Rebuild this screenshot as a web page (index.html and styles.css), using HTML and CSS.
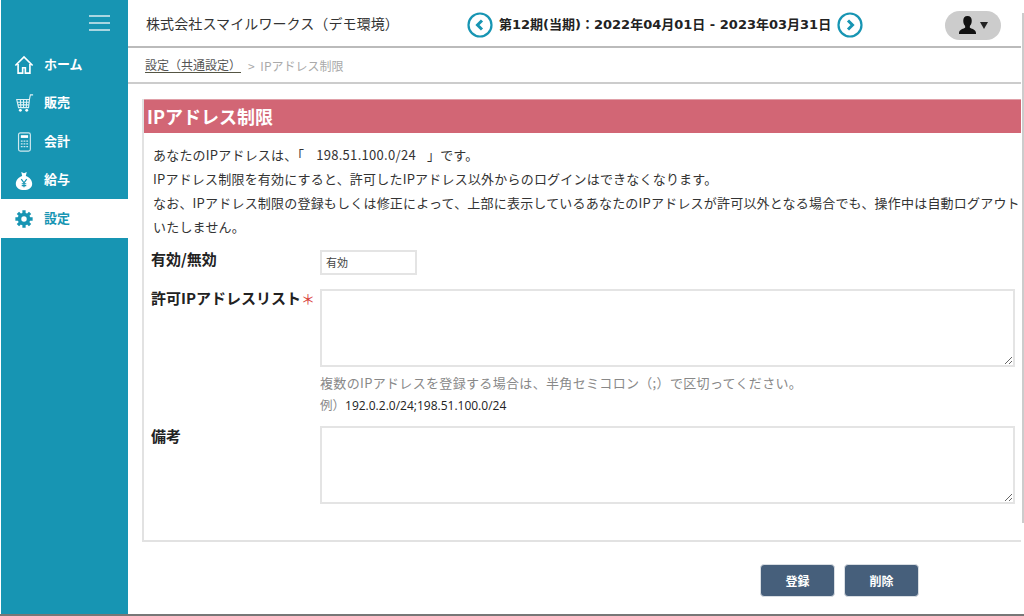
FILE: index.html
```html
<!DOCTYPE html>
<html lang="ja">
<head>
<meta charset="utf-8">
<title>IPアドレス制限</title>
<link rel="stylesheet" href="styles.css">
</head>
<body>
<div class="app">
  <aside class="side">
    <div class="burger"><span></span><span></span><span></span></div>
    <nav class="nav">
      <a class="item"><svg class="ico" viewBox="0 0 22 22"><path d="M1.500 11.500 11 2l9.500 9.500M4.500 10v10h5v-6h3v6h5V10" fill="none" stroke="#fff" stroke-width="1.800"/></svg><span>ホーム</span></a>
      <a class="item"><svg class="ico" viewBox="0 0 22 22"><path d="M3 6h14l-1 9H5zM17 6l1-5h3M7 6l.5 9M10.500 6v9M14 6l-.5 9M3.500 9h13M4 12h12" fill="none" stroke="#dff1f5" stroke-width="1.200"/><circle cx="7" cy="18" r="1.600" fill="#fff"/><circle cx="14" cy="18" r="1.600" fill="#fff"/></svg><span>販売</span></a>
      <a class="item"><svg class="ico" viewBox="0 0 22 22"><rect x="5" y="1" width="13" height="20" rx="2" fill="none" stroke="#cfe9ef" stroke-width="1.300"/><rect x="7.500" y="3.500" width="8" height="3" fill="#fff"/><path d="M7.500 10h2M10.500 10h2M13.500 10h2M7.500 13h2M10.500 13h2M13.500 13h2M7.500 16h2M10.500 16h2M13.500 16h2" stroke="#cfe9ef" stroke-width="1.400"/></svg><span>会計</span></a>
      <a class="item"><svg class="ico" viewBox="0 0 22 22"><path d="M8 1l3 1.500L14 1l-1 4.500c4 1.500 7 4.500 7 8.500 0 4.500-4 7-9 7s-9-2.500-9-7c0-4 3-7 7-8.500z" fill="#fff"/><path d="M8 9l3 4 3-4M11 13v5M8.500 14h5M8.500 16h5" fill="none" stroke="#1795b3" stroke-width="1.300"/></svg><span>給与</span></a>
      <a class="item active"><svg class="ico" viewBox="0 0 22 22"><circle cx="11" cy="11" r="5" fill="none" stroke="#1795b3" stroke-width="4"/><path d="M11 1.500v4M11 16.500v4M1.500 11h4M16.500 11h4M4.300 4.300l2.800 2.800M14.900 14.900l2.800 2.800M4.300 17.700l2.800-2.800M14.900 7.100l2.800-2.800" stroke="#1795b3" stroke-width="3.600"/></svg><span>設定</span></a>
    </nav>
  </aside>
  <main class="main">
    <header class="top">
      <div class="company">株式会社スマイルワークス（デモ環境）</div>
      <div class="period">
        <svg class="arrow" viewBox="0 0 26 26"><circle cx="13" cy="13" r="11.500" fill="none" stroke="#1795b3" stroke-width="2.200"/><path d="M15 8.500 10.500 13l4.500 4.500" fill="none" stroke="#1795b3" stroke-width="3"/></svg>
        <span>第12期(当期)：2022年04月01日 - 2023年03月31日</span>
        <svg class="arrow" viewBox="0 0 26 26"><circle cx="13" cy="13" r="11.500" fill="none" stroke="#1795b3" stroke-width="2.200"/><path d="M11 8.500 15.500 13 11 17.500" fill="none" stroke="#1795b3" stroke-width="3"/></svg>
      </div>
      <div class="user">
        <svg class="user-ico" viewBox="0 0 18 20"><path d="M9 0c3 0 4.500 2.200 4.500 5 0 2.500-1 4.500-2 5.500v2c1 1 6.500 1.500 6.500 5.500v1H0v-1c0-4 5.500-4.500 6.500-5.500v-2c-1-1-2-3-2-5.500C4.500 2.200 6 0 9 0z" fill="#111"/></svg>
        <span class="caret"></span>
      </div>
    </header>
    <div class="crumb"><a class="crumb-link">設定（共通設定）</a><span class="crumb-rest">&gt; IPアドレス制限</span></div>
    <section class="panel">
      <h1 class="title">IPアドレス制限</h1>
      <div class="body">
        <p class="note">あなたのIPアドレスは、「<span class="ip">198.51.100.0/24</span>」です。</p>
        <p class="note">IPアドレス制限を有効にすると、許可したIPアドレス以外からのログインはできなくなります。</p>
        <p class="note">なお、IPアドレス制限の登録もしくは修正によって、上部に表示しているあなたのIPアドレスが許可以外となる場合でも、操作中は自動ログアウトいたしません。</p>
        <div class="row row-state">
          <label class="label">有効/無効</label>
          <div class="select">有効</div>
        </div>
        <div class="row row-list">
          <label class="label">許可IPアドレスリスト<span class="req">＊</span></label>
          <div class="field">
            <textarea class="area"></textarea>
            <p class="hint">複数のIPアドレスを登録する場合は、半角セミコロン（;）で区切ってください。</p>
            <p class="hint hint-ex">例）<span class="ex">192.0.2.0/24;198.51.100.0/24</span></p>
          </div>
        </div>
        <div class="row row-memo">
          <label class="label">備考</label>
          <div class="field"><textarea class="area"></textarea></div>
        </div>
      </div>
    </section>
    <div class="actions">
      <button class="btn">登録</button>
      <button class="btn">削除</button>
    </div>
  </main>
  <div class="scroll-thumb"></div>
</div>
</body>
</html>
```
FILE: styles.css
```css
* { box-sizing: border-box; }
html, body { margin: 0; height: 100%; overflow: hidden; background: #fff; }
body { font-family: "Noto Sans CJK JP", "Open Sans", sans-serif; color: #333; }
.app { position: relative; display: flex; width: 1024px; height: 616px; padding-left: 1px; border-bottom: 2px solid #777; }
.scroll-thumb { position: absolute; top: 13px; right: 0; width: 2px; height: 510px; background: #ccc; }
.side { width: 127px; flex: none; background: #1795b3; }
.burger { display: flex; flex-direction: column; gap: 5px; align-items: flex-end; padding: 15px 18px 0 0; height: 45px; }
.burger span { display: block; width: 21px; height: 2px; background: #a9d6e1; }
.item { display: flex; align-items: center; height: 38.500px; padding-left: 13px; gap: 10px; color: #fff; font-size: 13px; font-weight: 700; }
.item span { margin-top: -2px; }
.item.active { background: #fff; color: #1795b3; }
.ico { width: 20px; height: 20px; flex: none; margin-top: 2px; }
.main { flex: 1; min-width: 0; padding-right: 3px; display: flex; flex-direction: column; }
.top { display: flex; align-items: center; height: 48px; flex: none; padding: 2px 0 0 18px; border-bottom: 2px solid #bbb; }
.company { font-size: 14px; letter-spacing: .1px; color: #333; width: 321px; white-space: nowrap; margin-top: -2px; }
.period { display: flex; align-items: center; gap: 6px; font-family: "DejaVu Sans", "Noto Sans CJK JP", sans-serif; font-size: 13px; font-weight: 700; color: #222; white-space: nowrap; }
.period span { margin-top: -2px; }
.arrow { width: 26px; height: 26px; flex: none; margin-top: 1px; }
.user { margin: 2px 20px 0 auto; width: 56px; height: 29px; border-radius: 15px; background: #ccc; display: flex; align-items: center; justify-content: center; gap: 4px; }
.user-ico { width: 17px; height: 19px; }
.caret { width: 0; height: 0; border-left: 4.500px solid transparent; border-right: 4.500px solid transparent; border-top: 7px solid #222; }
.crumb { height: 36px; flex: none; display: flex; align-items: center; padding-left: 17px; gap: 7px; font-size: 12px; border-bottom: 2px solid #ccc; }
.crumb-link { color: #555; border-bottom: 1px solid #554; line-height: 15px; }
.crumb-rest { color: #aaa; word-spacing: 3px; }
.panel { margin: 15px 0 0 14px; border-left: 2px solid #e2e2e2; border-bottom: 2px solid #e2e2e2; height: 443px; flex: none; }
.title { margin: 0; height: 34px; background: #d26675; color: #fff; font-size: 18px; font-weight: 700; line-height: 32px; padding-left: 3px; border-top: 1px solid #e0a0a8; }
.body { padding: 10px 0 0 9px; }
.note { margin: 0; font-size: 13px; letter-spacing: .2px; line-height: 24px; color: #333; }
.ip { margin: 0 11px 0 12px; letter-spacing: .3px; }
.row { display: flex; margin-left: -2px; }
.label { width: 169px; flex: none; font-size: 15px; font-weight: 700; color: #222; white-space: nowrap; line-height: 18px; margin-top: 1px; }
.req { color: #d8403a; font-size: 14px; font-weight: 400; }
.row-state { margin-top: 10px; height: 40px; }
.row-list .label { margin-top: 0; }
.select { width: 97px; height: 25px; margin-top: 1px; border: 2px solid #e4e4e4; font-size: 11px; line-height: 21px; padding-left: 4px; color: #444; }
.row-list { height: 137px; }
.field { width: 695px; }
.area { display: block; width: 695px; height: 78px; margin: 0; border: 2px solid #e4e4e4; background: #fff; border-radius: 0; }
.hint { margin: 0; font-size: 13px; line-height: 20px; color: #888; letter-spacing: .33px; }
.row-list .hint:first-of-type { margin-top: 6px; }
.hint-ex { margin-top: 2px; font-size: 12.500px; letter-spacing: 0; }
.ex { color: #222; font-family: "Open Sans", sans-serif; font-size: 12px; }
.actions { display: flex; justify-content: flex-end; gap: 9px; padding: 22px 102px 0 0; }
.btn { width: 75px; height: 33px; border: 1px solid #d9dee3; border-radius: 4px; background: #465f7b; color: #fff; font-family: inherit; font-size: 12px; font-weight: 700; padding: 0; }
```
